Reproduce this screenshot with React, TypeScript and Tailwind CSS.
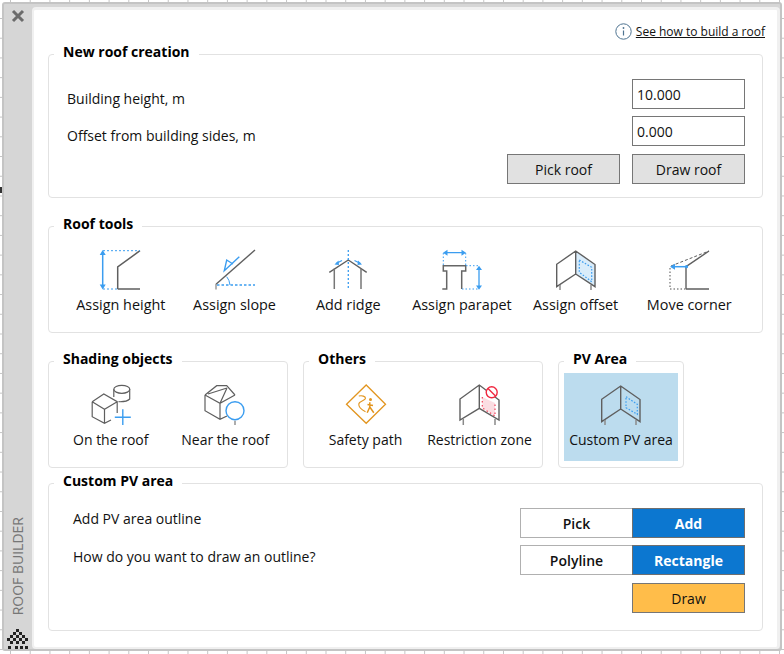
import type { ReactNode } from "react";

const ink = "#5f5f5f";
const leg = "#8a8a8a";
const blue = "#3b9df0";

function AssignHeight() {
  return (
    <svg width="44" height="44" viewBox="0 0 44 44" fill="none" className="block">
      <path d="M18.7 41V19L41 2.7M18.7 41H41" stroke={ink} strokeWidth="1.5" />
      <path d="M4 2.7H41M4 41H18" stroke={blue} strokeDasharray="2 2" />
      <path d="M3.7 5V38" stroke={blue} strokeWidth="1.5" />
      <path d="M0.7 7L3.7 2L6.7 7ZM0.7 36.5L3.7 41.5L6.7 36.5Z" fill={blue} />
    </svg>
  );
}
function AssignSlope() {
  return (
    <svg width="44" height="44" viewBox="0 0 44 44" fill="none" className="block">
      <path d="M3 36.3L42 2" stroke={ink} strokeWidth="1.4" />
      <path d="M3 36V41.5" stroke="#9a9a9a" strokeWidth="1.5" />
      <path d="M4 37H42" stroke={blue} strokeDasharray="2.5 2" strokeWidth="1.4" />
      <path d="M13.7 28.7Q16.5 32 17 37" stroke={blue} />
      <path d="M26.3 8.7L11.3 22.7L13.7 12L20 16" stroke={blue} strokeWidth="1.4" />
    </svg>
  );
}
function AddRidge() {
  return (
    <svg width="44" height="44" viewBox="0 0 44 44" fill="none" className="block">
      <path d="M3.3 24.3L22.3 12L40.7 24.3" stroke={ink} strokeWidth="1.4" />
      <path d="M8.3 20.5V41M35 20.5V41" stroke="#777" strokeWidth="1.5" />
      <path d="M22.3 2V41" stroke={blue} strokeDasharray="2 2" strokeWidth="1.3" />
      <path d="M16 12.5L10 15.5M28.5 12.5L34.5 15.5" stroke={blue} strokeWidth="1.2" />
      <path d="M8.5 16.5L12.5 12.5L13 17ZM36 16.5L32 12.5L31.5 17Z" fill={blue} />
    </svg>
  );
}
function AssignParapet() {
  return (
    <svg width="44" height="44" viewBox="0 0 44 44" fill="none" className="block">
      <path d="M2.3 41H6.7V23H3.3V17.7H25.7V23H21.7V41" stroke="#666" strokeWidth="1.5" />
      <path d="M3.3 5V17M25.7 5V17M26 17.7H38.3M22 41H38.3" stroke={blue} strokeDasharray="1.5 2" />
      <path d="M6 4.7H23M39 21V39" stroke={blue} strokeWidth="1.3" />
      <path d="M7.5 1.7L3 4.7L7.5 7.7ZM21.5 1.7L26 4.7L21.5 7.7ZM36 22L39 17.7L42 22ZM36 37.5L39 41.8L42 37.5Z" fill={blue} />
    </svg>
  );
}
function Wall({ fill, dots }: { fill?: string; dots: string }) {
  return (
    <svg width="42" height="44" viewBox="0 0 42 44" fill="none" className="block">
      {fill && <path d="M20.7 3L40 17V38.7L20.7 26Z" fill={fill} />}
      <path d="M1.7 38.7V16.3L20.7 3L40 16.5V38.7L20.7 26L1.7 38.7ZM20.7 3V26" stroke={ink} strokeWidth="1.4" />
      <path d="M5 37V42M36 37V42" stroke={leg} strokeWidth="1.5" />
      <path d={dots} stroke={blue} strokeDasharray="1.6 1.6" strokeWidth="1.2" />
    </svg>
  );
}
function MoveCorner() {
  return (
    <svg width="44" height="44" viewBox="0 0 44 44" fill="none" className="block">
      <path d="M19 18.7L42 3M19 19V41M19 41H42" stroke={ink} strokeWidth="1.4" />
      <path d="M4 18L42 3" stroke={ink} strokeDasharray="3 2" />
      <path d="M3 20V41H19" stroke={leg} strokeDasharray="1.5 2" strokeWidth="1.5" />
      <path d="M6 18.7H19" stroke={blue} strokeWidth="1.5" />
      <path d="M8 15.7V21.7L3 18.7Z" fill={blue} />
      <circle cx="19.5" cy="18.7" r="1.6" fill={blue} />
    </svg>
  );
}
function OnRoof() {
  return (
    <svg width="44" height="44" viewBox="0 0 44 44" fill="none" className="block">
      <ellipse cx="32.8" cy="6.3" rx="8" ry="4" stroke={ink} strokeWidth="1.2" />
      <path d="M24.8 6.3V14M40.7 6.3V16Q38 19 29.5 18.7" stroke={ink} strokeWidth="1.2" />
      <path d="M3.2 18.7L14.8 11L28.2 18.7V30M22 37L15.5 40.3L3.2 33.7V18.7M3.2 18.7L15.5 26.3L28.2 18.7M15.5 26.3V40.3" stroke={ink} strokeWidth="1.2" />
      <path d="M25.8 34.3H41.8M33.8 26.3V42" stroke={blue} strokeWidth="1.4" />
    </svg>
  );
}
function NearRoof() {
  return (
    <svg width="44" height="44" viewBox="0 0 44 44" fill="none" className="block">
      <path d="M2 12V27.7L17 36.3L24 33M2 12L13.7 2.7H23.7L32 12M2 12L17 20.3L32 12M17 20.3V36.3M5 11L24 5M17 20.3L24 5" stroke={ink} strokeWidth="1.2" />
      <circle cx="32" cy="27.7" r="9" fill="#fff" stroke={blue} strokeWidth="1.4" />
      <path d="M32 37.7V42" stroke={leg} strokeWidth="1.4" />
    </svg>
  );
}
function SafetyPath() {
  const o = "#e2951f";
  return (
    <svg width="44" height="44" viewBox="0 0 44 44" fill="none" className="block">
      <path d="M22.2 2L41.5 21.3L22.2 40.3L2.5 21.3Z" stroke={o} strokeWidth="1.3" />
      <path d="M14.8 13C18 12.5 21.5 13 21.5 15.3C21.5 17.5 15 18 14.8 21C14.5 24.5 18 27 21.5 28.7" stroke={o} strokeWidth="1.1" />
      <circle cx="26.5" cy="16.5" r="1.5" fill={o} />
      <path d="M25.8 19.3V24L23.2 29.7M25.8 24L29.8 29.7M23.5 21.5L29 22.5" stroke={o} strokeWidth="1.5" />
    </svg>
  );
}
function Restriction() {
  return (
    <svg width="42" height="44" viewBox="0 0 42 44" fill="none" className="block">
      <path d="M23.3 14L36 20V33L23.3 25Z" fill="#fbdde2" />
      <path d="M1 37V16L20.3 2L40 17V37L20.3 25.3L1 37ZM20.3 2V25.3" stroke={ink} strokeWidth="1.4" />
      <path d="M4.3 36V42M36 36V42" stroke={leg} strokeWidth="1.5" />
      <path d="M23.3 14V25L36 33V20" stroke="#f0405a" strokeDasharray="1.5 2.5" strokeWidth="1.2" />
      <circle cx="32.7" cy="9.3" r="5.5" fill="#fff" stroke="#f02840" strokeWidth="1.4" />
      <path d="M29 5.5L36.5 13" stroke="#f02840" strokeWidth="1.4" />
    </svg>
  );
}

function Legend({ children, className }: { children: string; className?: string }) {
  return (
    <h3 className={`ml-[5px] w-fit bg-white px-[9px] text-[14px] font-bold leading-[19px] text-black ${className ?? "-mt-[13px]"}`}>
      {children}
    </h3>
  );
}
function Tool({ label, icon, className, labelClass }: { label: string; icon: ReactNode; className?: string; labelClass?: string }) {
  return (
    <div className={`flex shrink-0 flex-col items-center ${className ?? ""}`}>
      <div className="flex h-[44px] items-end justify-center">{icon}</div>
      <span className={`mt-[3px] whitespace-nowrap leading-[19px] text-[#111] ${labelClass ?? "text-[14px]"}`}>{label}</span>
    </div>
  );
}
function Btn({ children, className }: { children: string; className: string }) {
  return (
    <button className={`flex h-[30px] items-center justify-center border text-[14px] ${className}`}>
      {children}
    </button>
  );
}
function Field({ value }: { value: string }) {
  return (
    <div className="flex h-[30px] w-[113px] items-center border border-[#767676] bg-white pl-[4px] text-[14px] text-[#111]">
      {value}
    </div>
  );
}

export default function App() {
  return (
    <div
      className="relative h-[654px] w-[784px] overflow-hidden bg-white bg-[linear-gradient(to_right,#c4c4c4_1px,transparent_1px),linear-gradient(to_bottom,#c4c4c4_1px,transparent_1px)] bg-[size:19.73px_19.73px] bg-[position:10px_18px] pt-[2px] pr-[2px] pb-[3px] pl-[2px] text-[#111]"
      style={{ fontFamily: '"Open Sans", "Noto Sans", "Liberation Sans", sans-serif' }}
    >
      <div className="absolute top-[187px] left-0 h-[6px] w-[2px] bg-[#333]" />
      <div className="flex h-full rounded-[3px] border-2 border-[#c4c4c4] bg-[#d6d6d6]">
        <aside className="flex w-[28px] flex-col items-center justify-between pt-[5px]">
          <svg width="14" height="14" viewBox="0 0 14 14" className="block">
            <path d="M2 2L12 12M12 2L2 12" stroke="#6b6b6b" strokeWidth="3" />
          </svg>
          <div className="flex flex-col items-center">
            <span className="mb-[14px] text-[14px] leading-[18px] text-[#767676] [transform:rotate(180deg)] [writing-mode:vertical-rl]">
              ROOF BUILDER
            </span>
            <svg width="22" height="20" viewBox="0 0 22 20" className="block" fill="#222">
              <path d="M9 0h3v3H9zM6 3h3v3H6zM12 3h3v3h-3zM3 6h3v3H3zM9 6h3v3H9zM15 6h3v3h-3zM6 9h3v3H6zM12 9h3v3h-3zM0 9h3v3H0zM18 9h3v3h-3zM3 12h3v3H3zM9 12h3v3H9zM15 12h3v3h-3zM1 17h3v3H1zM8 17h3v3H8zM13 17h3v3h-3zM18 17h3v3h-3z" />
            </svg>
          </div>
        </aside>
        <main className="mt-[3px] flex-1 rounded-[4px] border-[3px] border-b-2 border-l-2 border-[#f0f0f0] bg-white px-[14px]">
          <div className="flex h-[30px] items-end justify-end">
            <div className="mr-[-2px] flex items-center gap-[4px] text-[12px] leading-[16px]">
              <svg width="17" height="17" viewBox="0 0 17 17" fill="none" className="block">
                <circle cx="8.5" cy="8.5" r="7.7" stroke="#4f7491" />
                <path d="M8.5 7.5V12.5" stroke="#4f7491" strokeWidth="1.2" />
                <circle cx="8.5" cy="5" r="0.9" fill="#4f7491" />
              </svg>
              <a className="underline">See how to build a roof</a>
            </div>
          </div>

          <section className="mt-[14px] h-[144px] rounded-[4px] border border-[#e2e2e2]">
            <Legend>New roof creation</Legend>
            <div className="flex flex-col items-stretch pt-[18px] pr-[17px] pl-[18px]">
              <div className="flex items-center justify-between">
                <span className="mt-[8px] text-[14px]">Building height, m</span>
                <Field value="10.000" />
              </div>
              <div className="mt-[7px] flex items-center justify-between">
                <span className="mt-[8px] text-[14px]">Offset from building sides, m</span>
                <Field value="0.000" />
              </div>
              <div className="mt-[8px] flex justify-end gap-[12px]">
                <Btn className="w-[113px] border-[#767676] bg-[#e1e1e1]">Pick roof</Btn>
                <Btn className="w-[113px] border-[#767676] bg-[#e1e1e1]">Draw roof</Btn>
              </div>
            </div>
          </section>

          <section className="mt-[28px] h-[107px] rounded-[4px] border border-[#e2e2e2]">
            <Legend>Roof tools</Legend>
            <div className="flex pt-[15px] pl-[15px]">
              <Tool label="Assign height" icon={<AssignHeight />} className="w-[113.7px]" labelClass="text-[14.4px]" />
              <Tool label="Assign slope" icon={<AssignSlope />} className="w-[113.7px]" labelClass="text-[14.4px]" />
              <Tool label="Add ridge" icon={<AddRidge />} className="w-[113.7px]" labelClass="text-[14.4px]" />
              <Tool label="Assign parapet" icon={<AssignParapet />} className="w-[113.7px]" labelClass="text-[14.4px]" />
              <Tool
                label="Assign offset"
                icon={<Wall dots="M24.3 12L36.7 19.3V33.7L24.3 24.3Z" fill="#d9ecfa" />}
                className="w-[113.7px]"
                labelClass="text-[14.4px]"
              />
              <Tool label="Move corner" icon={<MoveCorner />} className="w-[113.7px]" labelClass="text-[14.4px]" />
            </div>
          </section>

          <div className="mt-[28px] flex gap-[15px]">
            <section className="h-[107px] w-[240px] rounded-[4px] border border-[#e2e2e2]">
              <Legend>Shading objects</Legend>
              <div className="flex pt-[15px] pl-[4.5px]">
                <Tool label="On the roof" icon={<OnRoof />} className="w-[114.5px]" />
                <Tool label="Near the roof" icon={<NearRoof />} className="w-[114.5px]" />
              </div>
            </section>
            <section className="h-[107px] w-[240px] rounded-[4px] border border-[#e2e2e2]">
              <Legend>Others</Legend>
              <div className="flex pt-[15px] pl-[4.5px]">
                <Tool label="Safety path" icon={<SafetyPath />} className="w-[114px]" />
                <Tool label="Restriction zone" icon={<Restriction />} className="w-[114px]" />
              </div>
            </section>
            <section className="h-[107px] w-[126px] rounded-[4px] border border-[#e2e2e2]">
              <Legend>PV Area</Legend>
              <div className="mx-[5px] mt-[5px] h-[88px] bg-[#bcdcee] pt-[10px]">
                <Tool label="Custom PV area" icon={<Wall dots="M26 13.7L37.3 21.3V31.3L26 24.7Z" />} />
              </div>
            </section>
          </div>

          <section className="mt-[15px] h-[148px] rounded-[4px] border border-[#e2e2e2]">
            <Legend className="-mt-[13px]">Custom PV area</Legend>
            <div className="flex justify-between pt-[18px] pr-[17px] pl-[24px]">
              <div className="mt-[1px] flex flex-col text-[14px]">
                <span className="leading-[19px]">Add PV area outline</span>
                <span className="mt-[19px] leading-[19px]">How do you want to draw an outline?</span>
              </div>
              <div className="flex flex-col items-end gap-[7px]">
                <div className="flex">
                  <Btn className="w-[112px] border-[#b0b0b0] border-r-0 bg-white font-semibold">Pick</Btn>
                  <Btn className="w-[113px] border-[#6f6f6f] bg-[#0c77d0] font-bold text-white">Add</Btn>
                </div>
                <div className="flex">
                  <Btn className="w-[112px] border-[#b0b0b0] border-r-0 bg-white font-semibold">Polyline</Btn>
                  <Btn className="w-[113px] border-[#6f6f6f] bg-[#0c77d0] font-bold text-white">Rectangle</Btn>
                </div>
                <Btn className="mt-[1px] w-[113px] border-[#767676] bg-[#ffbd4a]">Draw</Btn>
              </div>
            </div>
          </section>
        </main>
      </div>
    </div>
  );
}
